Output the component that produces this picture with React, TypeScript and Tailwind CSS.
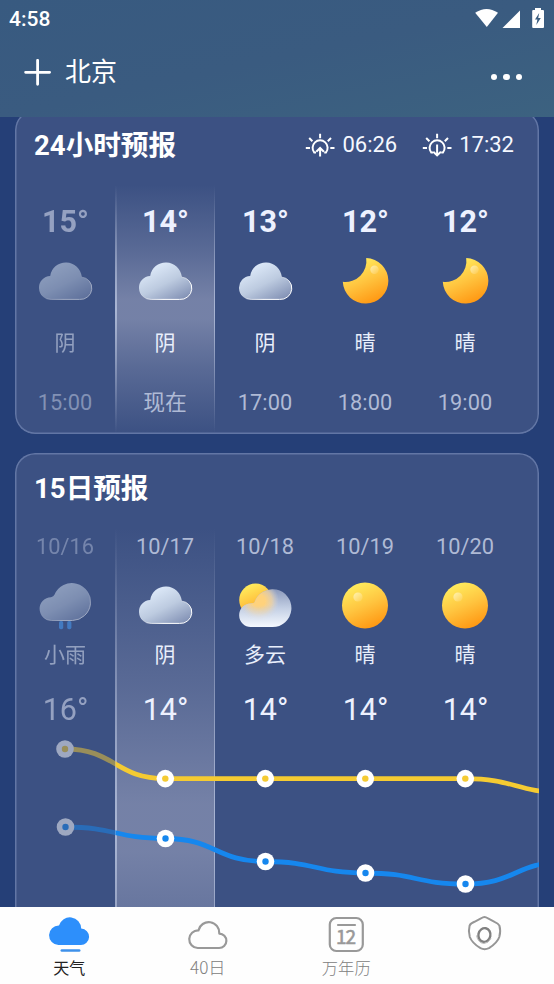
import React from "react";

type Kind = "cloud" | "moon" | "rain" | "partly" | "sun";

function Defs() {
  return (
    <svg className="absolute h-0 w-0" aria-hidden="true">
      <defs>
        <linearGradient id="cloud" x1="0.2" y1="0.1" x2="0.85" y2="1">
          <stop offset="0" stopColor="#dfebfa" />
          <stop offset="0.5" stopColor="#bdcbe0" />
          <stop offset="1" stopColor="#8190b4" />
        </linearGradient>
        <linearGradient id="edge" x1="0.2" y1="0.2" x2="0.8" y2="1">
          <stop offset="0.35" stopColor="#fff" stopOpacity="0" />
          <stop offset="0.8" stopColor="#fff" />
        </linearGradient>
        <linearGradient id="sun" x1="0.25" y1="0" x2="0.7" y2="1">
          <stop offset="0" stopColor="#fff060" />
          <stop offset="0.5" stopColor="#ffc540" />
          <stop offset="1" stopColor="#ff9510" />
        </linearGradient>
        <linearGradient id="shine" x1="0" y1="0" x2="1" y2="1">
          <stop offset="0" stopColor="#fff" stopOpacity="0.55" />
          <stop offset="1" stopColor="#fff" stopOpacity="0.05" />
        </linearGradient>
        <linearGradient id="front" x1="0.5" y1="0" x2="0.5" y2="1">
          <stop offset="0" stopColor="#8c9abc" />
          <stop offset="0.5" stopColor="#c3cfe4" />
          <stop offset="1" stopColor="#f5f9ff" />
        </linearGradient>
        <radialGradient id="glow" cx="24" cy="26" r="20" gradientUnits="userSpaceOnUse">
          <stop offset="0.3" stopColor="#ffd27c" />
          <stop offset="0.65" stopColor="#f3d4a0" stopOpacity="0.75" />
          <stop offset="1" stopColor="#d8d8dc" stopOpacity="0" />
        </radialGradient>
        <linearGradient id="fade" x1="0" y1="0" x2="0" y2="1">
          <stop offset="0.5" stopColor="#fff" />
          <stop offset="0.8" stopColor="#000" />
        </linearGradient>
        <mask id="glowMask">
          <rect width="60" height="60" fill="url(#fade)" />
        </mask>
      </defs>
    </svg>
  );
}

const PARTLY = "M16 52a11.600 11.800 0 0 1-.5-23.600q2.600-.2 4-1A18.900 18.900 0 1 1 37.500 52Z";

function WeatherIcon({ kind }: { kind: Kind }) {
  return (
    <svg width="60" height="60" viewBox="0 0 60 60" className="block shrink-0">
      {kind === "cloud" && (
        <path
          d="M16.200 48.400a11.500 11.500 0 0 1-1-23.400A15.800 15.800 0 0 1 46.600 26 11 11 0 0 1 44.500 48.400Z"
          fill="url(#cloud)"
          stroke="url(#edge)"
        />
      )}
      {kind === "moon" && (
        <g>
          <path d="M31.200 7A22.800 22.800 0 1 1 7.800 30.800 21 21 0 0 0 31.200 7Z" fill="url(#sun)" />
          <circle cx="39.500" cy="18.700" r="4.200" fill="url(#shine)" />
        </g>
      )}
      {kind === "sun" && (
        <g>
          <circle cx="30" cy="30.500" r="23" fill="url(#sun)" />
          <circle cx="23" cy="22" r="4.600" fill="url(#shine)" />
        </g>
      )}
      {kind === "rain" && (
        <g>
          <path
            d="M16.500 45.500a11.400 11.400 0 0 1-.5-23.300q2.600-.2 3.600-2.600A18.700 18.700 0 1 1 37.500 45.500Z"
            fill="url(#cloud)"
            stroke="url(#edge)"
          />
          <rect x="24" y="46" width="4.200" height="8.200" rx="1.800" fill="#4aa3ff" />
          <rect x="32.200" y="46" width="4.200" height="8.200" rx="1.800" fill="#4aa3ff" />
        </g>
      )}
      {kind === "partly" && (
        <g>
          <circle cx="20.600" cy="25" r="16.400" fill="url(#sun)" />
          <path d={PARTLY} fill="url(#front)" />
          <path d={PARTLY} fill="url(#glow)" mask="url(#glowMask)" />
        </g>
      )}
    </svg>
  );
}

function SunTime({ rise, time }: { rise: boolean; time: string }) {
  return (
    <div className="flex items-center gap-[7px]">
      <svg width="30" height="24" viewBox="0 0 30 24" fill="none" stroke="#fff" strokeWidth="2">
        <path d="M.8 14.900h4.200M25.300 14.900h4.200M15.100 .7v4.500M4.200 5l3.200 3.300M26 5l-3.200 3.300" />
        <path d="M11 19.600H9.300a7.500 7.500 0 1 1 11.600 0H19.200" />
        {rise ? <path d="M15.100 23.500v-8M11.300 18.800l3.800-3.800 3.800 3.800" /> : <path d="M15.100 11.500V22M11.300 18.800l3.800 3.600 3.800-3.600" />}
      </svg>
      <span className="text-[22px] leading-6 text-[#f5f8ff]">{time}</span>
    </div>
  );
}

const hours: { temp: string; kind: Kind; label: string; time: string }[] = [
  { temp: "15°", kind: "cloud", label: "阴", time: "15:00" },
  { temp: "14°", kind: "cloud", label: "阴", time: "现在" },
  { temp: "13°", kind: "cloud", label: "阴", time: "17:00" },
  { temp: "12°", kind: "moon", label: "晴", time: "18:00" },
  { temp: "12°", kind: "moon", label: "晴", time: "19:00" },
];

const days: { date: string; kind: Kind; label: string; temp: string }[] = [
  { date: "10/16", kind: "rain", label: "小雨", temp: "16°" },
  { date: "10/17", kind: "cloud", label: "阴", temp: "14°" },
  { date: "10/18", kind: "partly", label: "多云", temp: "14°" },
  { date: "10/19", kind: "sun", label: "晴", temp: "14°" },
  { date: "10/20", kind: "sun", label: "晴", temp: "14°" },
];

const highs = [[50, 15], [150.3, 44.6], [250.3, 44.6], [350.3, 44.6], [450.3, 44.6], [550, 58.5]];
const lows = [[50.5, 93], [150.5, 104.5], [250.5, 127.5], [350.5, 139], [450.5, 150], [550.5, 128]];

function curve(points: number[][]) {
  return points.reduce((path, [x, y], i) => {
    if (i === 0) return `M${x} ${y}`;
    const [px, py] = points[i - 1];
    const mid = (px + x) / 2;
    return `${path}C${mid} ${py} ${mid} ${y} ${x} ${y}`;
  }, "");
}

function Chart() {
  const series = [
    { points: highs, color: "#f5cb32" },
    { points: lows, color: "#1687ee" },
  ];
  return (
    <svg width="524" height="173" viewBox="0 0 524 173" className="relative z-10 block">
      <clipPath id="past"><rect width="100.500" height="173" /></clipPath>
      <clipPath id="ahead"><rect x="100.500" width="424" height="173" /></clipPath>
      {["past", "ahead"].map((part) => (
        <g key={part} clipPath={`url(#${part})`} opacity={part === "past" ? 0.5 : 1}>
          {series.map(({ points, color }) => (
            <g key={color}>
              <path d={curve(points)} fill="none" stroke={color} strokeWidth="4.800" />
              {points.slice(0, 5).map(([x, y]) => (
                <g key={x}>
                  <circle cx={x} cy={y} r="8.800" fill="#fff" />
                  <circle cx={x} cy={y} r="3.200" fill={color} />
                </g>
              ))}
            </g>
          ))}
        </g>
      ))}
    </svg>
  );
}

const card = "relative w-[524px] shrink-0 overflow-hidden bg-[#3c5183]";
const outline = "pointer-events-none absolute inset-x-0 top-0 rounded-[20px] shadow-[inset_0_0_0_1.5px_#6276a5]";

function Highlight({ size }: { size: string }) {
  return (
    <div className={`absolute left-[100px] top-[75px] w-[100px] bg-[linear-gradient(to_bottom,#7884a900,#7884a980_27%,#7884a9f0_46%,#7884a9f0_54%,#7884a980_73%,#7884a900)] ${size}`}>
      <div className="flex h-full justify-between">
        <div className="w-[1.5px] bg-linear-to-b from-[#a9b5d3]/0 via-[#a9b5d3] to-[#a9b5d3]/0" />
        <div className="w-[1.5px] bg-linear-to-b from-[#a9b5d3]/0 via-[#a9b5d3] to-[#a9b5d3]/0" />
      </div>
    </div>
  );
}

export default function App() {
  return (
    <div className="relative flex h-[984px] w-[554px] flex-col overflow-hidden bg-[#253f77] font-[Roboto,'Noto_Sans_CJK_SC',sans-serif] text-white">
      <Defs />
      <header className="h-[117px] shrink-0 bg-linear-to-br from-[#385a80] via-[#3a5b80] to-[#3c6280]">
        <div className="flex h-[38px] items-center justify-between px-[9px]">
          <span className="text-[21px] font-medium leading-none">4:58</span>
          <svg width="72" height="24" viewBox="0 0 72 24" fill="#fff">
            <path d="M2.200 5.800Q13.500-1.800 25 5.800L13.800 20Z" />
            <path d="M29.500 21 47 3.500V21Z" />
            <path d="M62 1h6v2h2q1 0 1 1v16q0 1-1 1H60.200q-1 0-1-1V4q0-1 1-1H62Z" />
            <path d="m66.200 6-4.200 6.500h2.400L63.300 18l4.500-7h-2.600Z" fill="#3b5e80" />
          </svg>
        </div>
        <div className="flex h-[68px] items-center pl-6 pr-8">
          <svg width="27" height="27" viewBox="0 0 27 27" stroke="#fff" strokeWidth="2.800" strokeLinecap="round">
            <path d="M13.600 1.300v24M1.600 13.300h24" />
          </svg>
          <span className="ml-[14px] text-[26px] leading-none">北京</span>
          <div className="ml-auto mt-[10px] flex gap-[6px]">
            <i className="h-[6.5px] w-[6.5px] rounded-full bg-white" />
            <i className="h-[6.5px] w-[6.5px] rounded-full bg-white" />
            <i className="h-[6.5px] w-[6.5px] rounded-full bg-white" />
          </div>
        </div>
      </header>

      <main className="flex h-[790px] shrink-0 flex-col gap-[19px] overflow-hidden pl-[15px]">
        <section className={`${card} -mt-[7px] h-[324px] rounded-[20px]`}>
          <Highlight size="h-[248px]" />
          <div className="relative flex h-[70px] items-center pl-[19px] pr-[25px]">
            <h2 className="mt-px text-[27.600px] font-bold leading-none">24小时预报</h2>
            <div className="ml-auto flex gap-[25px]">
              <SunTime rise time="06:26" />
              <SunTime rise={false} time="17:32" />
            </div>
          </div>
          <div className="relative flex pt-5">
            {hours.map((h, i) => (
              <div key={i} className="flex w-[100px] flex-col items-center">
                <div className={`flex w-full flex-col items-center ${i === 0 ? "opacity-50" : ""}`}>
                  <div className="flex h-[42px] items-center pl-px pt-0.5 text-[30.500px] font-bold text-[#edf1ff]">{h.temp}</div>
                  <div className="flex h-[78px] items-center"><WeatherIcon kind={h.kind} /></div>
                  <div className="flex h-11 items-center pt-[3px] text-[21px] text-[#e8eefb]">{h.label}</div>
                </div>
                <div className={`mt-1.5 flex h-16 items-center pt-0.5 text-[21.800px] ${i === 0 ? "text-[#8291b5]" : "text-[#afbad5]"}`}>{h.time}</div>
              </div>
            ))}
          </div>
          <div className={`${outline} bottom-0`} />
        </section>

        <section className={`${card} h-[454px] rounded-t-[20px]`}>
          <Highlight size="h-[600px]" />
          <div className="relative flex h-[70px] items-center pl-[19px]">
            <h2 className="mt-px text-[27.600px] font-bold leading-none">15日预报</h2>
          </div>
          <div className="relative flex pt-[3px]">
            {days.map((d, i) => (
              <div key={i} className={`flex w-[100px] flex-col items-center ${i === 0 ? "opacity-50" : ""}`}>
                <div className="flex h-10 items-center pt-0.5 text-[21.800px] text-[#afbad5]">{d.date}</div>
                <div className="mt-1.5 flex h-[66px] items-center"><WeatherIcon kind={d.kind} /></div>
                <div className="flex h-8 items-center pt-[3px] text-[21px] text-[#e8eefb]">{d.label}</div>
                <div className="mt-[14px] flex h-[50px] items-center pl-px pt-0.5 text-[30.500px] text-[#edf1ff]">{d.temp}</div>
              </div>
            ))}
          </div>
          <div className={`${outline} -bottom-8`} />
          <Chart />
        </section>
      </main>

      <nav className="grid h-[77px] shrink-0 grid-cols-4 bg-[#fefefe] font-['Noto_Sans_CJK_SC',sans-serif] text-base text-[#808080]">
        <div className="flex flex-col items-center pt-[9px] text-[#222]">
          <svg width="42" height="38" viewBox="0 0 42 38" fill="#2d8ffb">
            <path d="M10.500 29a9.600 9.600 0 0 1 .5-19.400A11.300 11.300 0 0 1 33.200 12.600 8 8 0 0 1 32.600 29Z" />
            <rect x="12.500" y="33.200" width="20" height="2.600" rx="1.300" fill="#3f91ea" />
          </svg>
          <span className="mt-[2px] leading-[22px]">天气</span>
        </div>
        <div className="flex flex-col items-center pt-[9px]">
          <svg width="42" height="38" viewBox="0 0 42 38" fill="none" stroke="#999" strokeWidth="2.200" strokeLinejoin="round">
            <path d="M10.700 32a8.600 8.600 0 0 1 .7-17.600A10.600 10.600 0 0 1 32.300 17.600 7 7 0 0 1 32 32Z" />
          </svg>
          <span className="mt-[2px] text-[17.200px] font-light leading-[22px]">40日</span>
        </div>
        <div className="flex flex-col items-center pt-[9px]">
          <svg width="38" height="38" viewBox="0 0 38 38" fill="none" stroke="#999" strokeWidth="2.200">
            <rect x="2.800" y="2" width="33" height="33" rx="6.500" />
            <path d="M11 9h17" strokeLinecap="round" />
            <text x="9" y="28" className="font-['Noto_Sans_CJK_SC',sans-serif] text-[19px] font-normal" fill="#999" stroke="#999" strokeWidth="0.600">1</text>
            <text x="18.600" y="28" className="font-['Noto_Sans_CJK_SC',sans-serif] text-[19px] font-normal" fill="#999" stroke="#999" strokeWidth="0.600">2</text>
          </svg>
          <span className="mt-[2px] text-[16.300px] font-light leading-[22px]">万年历</span>
        </div>
        <div className="flex flex-col items-center pt-2">
          <svg width="38" height="38" viewBox="0 0 38 38" fill="none" stroke="#969696" strokeWidth="2">
            <path d="M18.500 2c1 0 2 .5 4 1.600l6 3.200q3.800 1.600 4.900 3.800c.9 3 .9 8-.1 11.400-1.500 4.500-5.500 8-10.300 11.200q-4.500 2-8.500 0C10 30.500 5.500 26.500 3.800 22c-1-3.400-1-8.400-.2-11.400Q4.500 8.400 8.500 6.800l6-3.200C16.500 2.500 17.500 2 18.500 2Z" />
            <ellipse cx="18.400" cy="20" rx="6" ry="6.900" strokeWidth="2.400" stroke="#808080" transform="rotate(12 18.400 20)" />
            <path d="M10.500 20.500q1.500 7.500 7.500 8 4.500-.2 7-5" stroke="#bbb" strokeWidth="1" />
          </svg>
        </div>
      </nav>
    </div>
  );
}
